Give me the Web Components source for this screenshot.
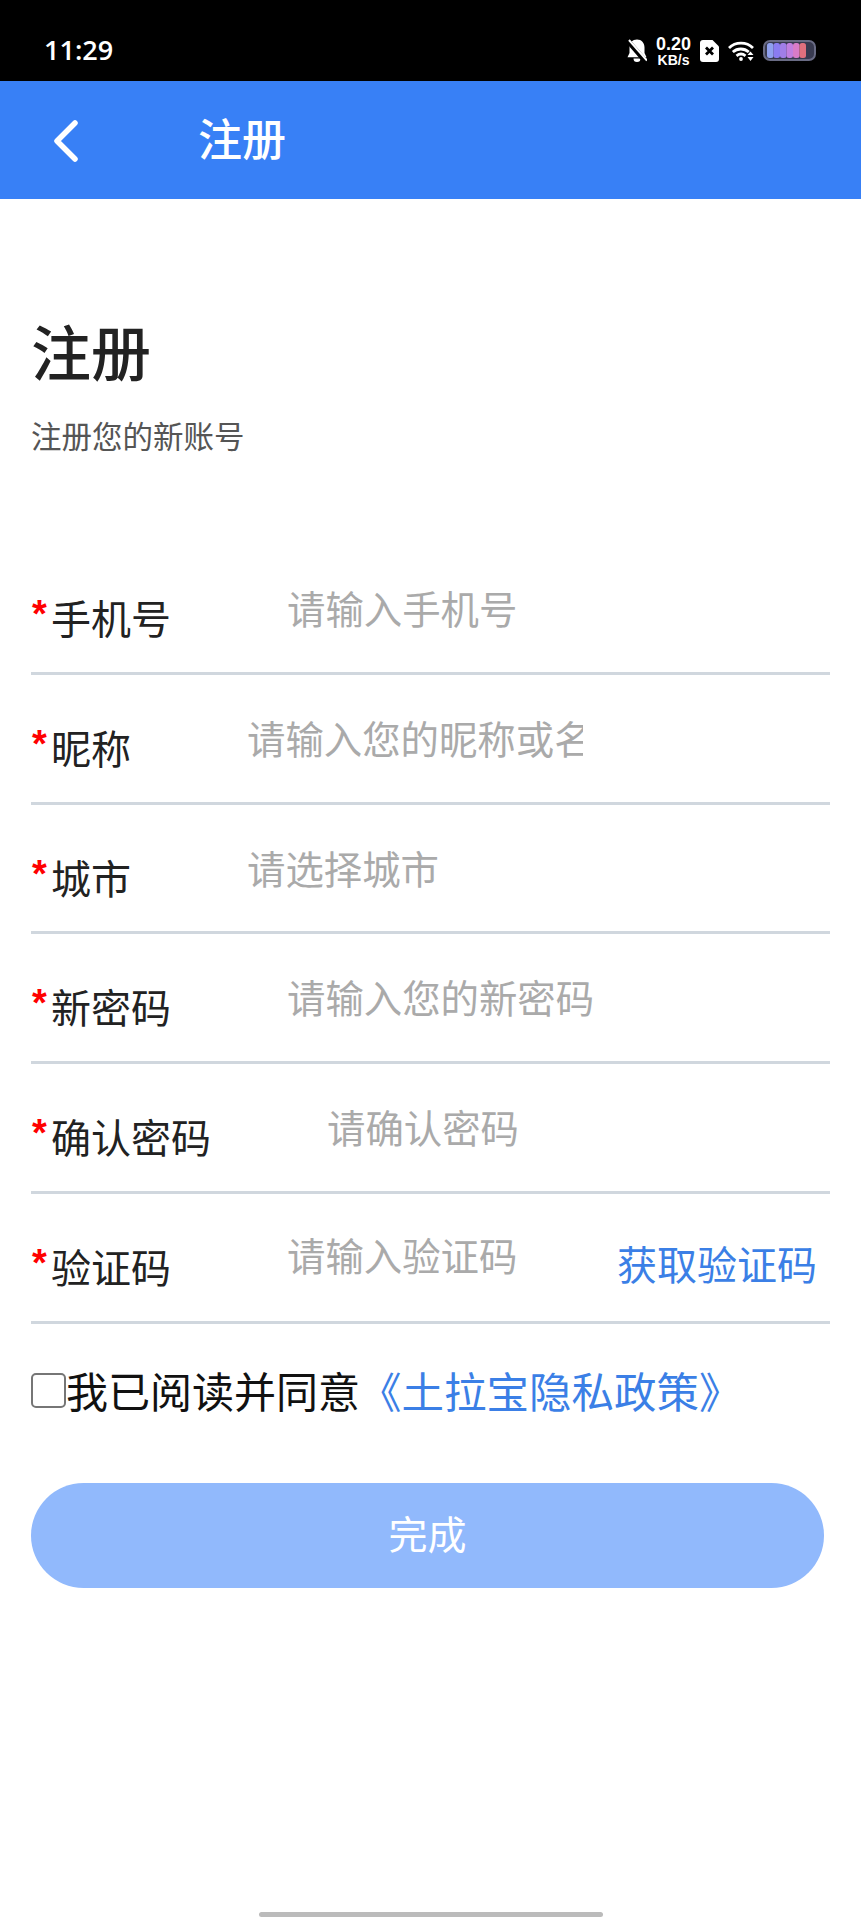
<!DOCTYPE html>
<html lang="zh">
<head>
<meta charset="utf-8">
<title>注册</title>
<style>
  html, body { margin: 0; background: #fff; }
  body { font-family: "Noto Sans CJK SC", "Noto Sans", sans-serif; }
</style>
</head>
<body>
<status-bar></status-bar>
<app-header>注册</app-header>
<register-form>
  <form-row label="手机号" placeholder="请输入手机号"></form-row>
  <form-row label="昵称" placeholder="请输入您的昵称或名字"></form-row>
  <form-row label="城市" placeholder="请选择城市"></form-row>
  <form-row label="新密码" placeholder="请输入您的新密码"></form-row>
  <form-row label="确认密码" placeholder="请确认密码"></form-row>
  <form-row label="验证码" placeholder="请输入验证码" action="获取验证码"></form-row>
</register-form>
<home-bar></home-bar>

<script>
// Barre d'état
class StatusBar extends HTMLElement {
    constructor() {
        super();
        this.attachShadow({ mode: 'open' }).innerHTML = `
            <style>
                :host { display: flex; align-items: center; height: 81px; background: #000; color: #fff; padding: 20px 45px 0 45px; box-sizing: border-box; }
                .time { font: 600 27px "Open Sans", sans-serif; flex: 1; margin-top: -2px; margin-left: -1px; }
                .icons { display: flex; align-items: center; gap: 9px; }
                .speed { display: flex; flex-direction: column; align-items: center; width: 35px; font-family: "Liberation Sans", sans-serif; font-weight: 700; margin-top: 1px; }
                .speed b { font-size: 18px; line-height: 18px; }
                .speed span { font-size: 14px; line-height: 15px; }
                svg { display: block; }
            </style>
            <span class="time">11:29</span>
            <div class="icons">
                <svg width="20" height="23" viewBox="0 0 20 23"><path d="M10 .5c4.500 0 7.500 3.500 7.500 8v5.500l2 4.200H.5l2-4.200V8.500c0-4.500 3-8 7.500-8zM6.500 19.500h7a3.500 3.500 0 0 1-7 0z" fill="#fff"/><path d="M0 1l19 22" stroke="#000" stroke-width="5"/><path d="M2 1l18 20.500" stroke="#fff" stroke-width="2"/></svg>
                <div class="speed"><b>0.20</b><span>KB/s</span></div>
                <svg width="19" height="22" viewBox="0 0 19 22"><path d="M3 0h9.500L19 6.500V19a3 3 0 0 1-3 3H3a3 3 0 0 1-3-3V3a3 3 0 0 1 3-3z" fill="#fff"/><path d="M6 7.500l7 7m0-7l-7 7" stroke="#000" stroke-width="2.800"/></svg>
                <svg width="26" height="20" viewBox="0 0 26 20" fill="none" stroke="#fff" stroke-width="2.800"><path d="M1 7C7.500 .6 18.500 .6 25 7"/><path d="M4.800 11c4.600-4 11.400-4 16 0"/><path d="M8.500 14.800c2.700-2.100 6.300-2.100 9 0"/><circle cx="13" cy="18" r="1.900" fill="#fff" stroke="none"/><path d="M22.500 10.500l-3 3.600h6zM22.500 20l-3-4h6z" fill="#fff" stroke="none"/></svg>
                <svg width="53" height="21" viewBox="0 0 53 21"><rect x="1" y="1" width="51" height="19" rx="6" fill="#383a50" stroke="#696b84" stroke-width="2"/><rect x="4" y="3" width="6.500" height="15" rx="2.500" fill="#8fa0ee"/><rect x="10.500" y="3" width="6.500" height="15" rx="2.500" fill="#8a7cf0"/><rect x="17" y="3" width="6.500" height="15" rx="2.500" fill="#a07ee8"/><rect x="23.500" y="3" width="6.500" height="15" rx="2.500" fill="#c07fe0"/><rect x="30" y="3" width="6.500" height="15" rx="2.500" fill="#d87cc8"/><rect x="36.500" y="3" width="6.500" height="15" rx="2.500" fill="#e0707e"/></svg>
            </div>
        `;
    }
}

// En-tête bleu
class AppHeader extends HTMLElement {
    constructor() {
        super();
        this.attachShadow({ mode: 'open' }).innerHTML = `
            <style>
                :host { display: flex; align-items: center; height: 118px; background: #3880f6; color: #fff; }
                svg { margin-left: 52px; display: block; margin-top: 2px; flex: none; }
                .title { margin-left: 118px; font-size: 44px; line-height: 1.2; font-weight: 500; margin-top: -5px; }
            </style>
            <svg width="28" height="42" viewBox="0 0 28 42" fill="none" stroke="#fff" stroke-width="5.500" stroke-linecap="round" stroke-linejoin="round"><path d="M23 3L5 21l18 18"/></svg>
            <span class="title"><slot></slot></span>
        `;
    }
}

// Formulaire d'inscription
class RegisterForm extends HTMLElement {
    constructor() {
        super();
        this.attachShadow({ mode: 'open' }).innerHTML = `
            <style>
                :host { display: block; padding: 0 31px; color: #222; }
                h1 { margin: 117px 0 0; font-size: 60px; line-height: 68px; font-weight: 500; color: #222; }
                .sub { margin-top: 31px; font-size: 30.500px; line-height: 40px; color: #555; }
                .rows { margin-top: 90px; display: flex; flex-direction: column; }
                .agree { display: flex; align-items: center; height: 43px; margin-top: 44px; font-size: 42px; color: #111; white-space: nowrap; }
                .box { width: 35px; height: 35px; border: 2px solid #767676; border-radius: 5px; box-sizing: border-box; margin-top: 2px; flex: none; }
                a { color: #3b7fe6; font-size: 42.500px; margin-left: -1px; }
                .btn { margin-top: 72px; width: 793px; height: 105px; box-sizing: border-box; padding-bottom: 6px; border-radius: 53px; background: #91b9fc; color: #fff; font-size: 39px; display: flex; align-items: center; justify-content: center; }
            </style>
            <h1>注册</h1>
            <div class="sub">注册您的新账号</div>
            <div class="rows"><slot></slot></div>
            <div class="agree"><span class="box"></span><span>我已阅读并同意</span><a>《土拉宝隐私政策》</a></div>
            <div class="btn">完成</div>
        `;
    }
}

// Ligne du formulaire
class FormRow extends HTMLElement {
    constructor() {
        super();
        const label = this.getAttribute('label');
        const placeholder = this.getAttribute('placeholder');
        const action = this.getAttribute('action');
        this.attachShadow({ mode: 'open' }).innerHTML = `
            <style>
                :host { display: flex; height: 129.800px; box-sizing: border-box; border-bottom: 3px solid #d0d7de; align-items: flex-start; }
                .label { font-size: 40px; line-height: 50px; margin-top: 47px; color: #222; white-space: nowrap; flex: none; display: flex; }
                .star { color: #f00; width: 20px; padding-left: 1px; box-sizing: border-box; font: 700 38px/44px "Liberation Sans", sans-serif; }
                .ph { margin-left: 116px; margin-top: ${action ? 28 : 30}px; font-size: 38.400px; line-height: 64px; color: #aaa; flex: 0 1 336px; min-width: 0; white-space: nowrap; overflow: hidden; }
                .action { margin-left: auto; margin-right: 13px; margin-top: 44px; font-size: 40px; line-height: 50px; color: #3b7fe6; white-space: nowrap; flex: none; }
            </style>
            <div class="label"><span class="star">*</span>${label}</div>
            <div class="ph">${placeholder}</div>
            ${action ? `<div class="action">${action}</div>` : ''}
        `;
    }
}

// Barre de navigation du bas
class HomeBar extends HTMLElement {
    constructor() {
        super();
        this.attachShadow({ mode: 'open' }).innerHTML = `
            <style>
                :host { display: block; position: absolute; left: 259px; top: 1912px; width: 344px; height: 5px; border-radius: 3px; background: #bbb; }
            </style>
        `;
    }
}

customElements.define('status-bar', StatusBar);
customElements.define('app-header', AppHeader);
customElements.define('register-form', RegisterForm);
customElements.define('form-row', FormRow);
customElements.define('home-bar', HomeBar);
</script>
</body>
</html>
